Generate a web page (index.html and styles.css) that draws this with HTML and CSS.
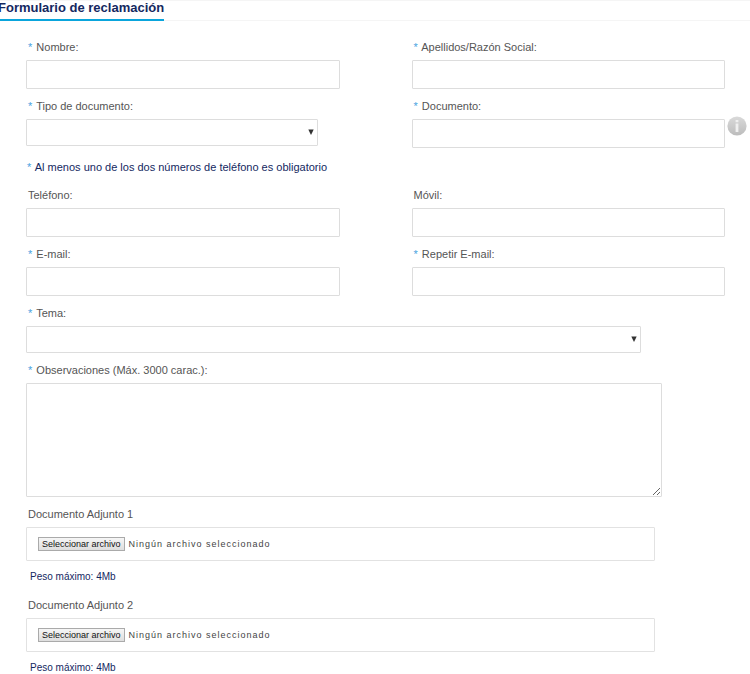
FILE: index.html
```html
<!DOCTYPE html>
<html lang="es">
<head>
<meta charset="utf-8">
<title>Formulario de reclamación</title>
<link rel="stylesheet" href="styles.css">
</head>
<body>
<header class="header">
  <h1 class="title">Formulario de reclamación</h1>
</header>
<form class="form">
  <div class="row">
    <div class="field">
      <label class="label" for="nombre"><span class="req">*</span> Nombre:</label>
      <input class="control" type="text" id="nombre">
    </div>
    <div class="field">
      <label class="label" for="apellidos"><span class="req">*</span> Apellidos/Razón Social:</label>
      <input class="control" type="text" id="apellidos">
    </div>
  </div>
  <div class="row">
    <div class="field">
      <label class="label" for="tipo"><span class="req">*</span> Tipo de documento:</label>
      <div class="select select-type">
        <select class="control" id="tipo"><option></option></select>
        <svg class="arrow" viewBox="0 0 6 6" aria-hidden="true"><path d="M0.3 0.5H5.7L3 6Z"/></svg>
      </div>
    </div>
    <div class="field">
      <label class="label" for="documento"><span class="req">*</span> Documento:</label>
      <div class="with-info">
        <input class="control" type="text" id="documento">
        <button class="info" type="button" aria-label="Información">
          <svg viewBox="0 0 20 20" width="20" height="20">
            <defs><linearGradient id="g" x1="0" y1="0" x2="0" y2="1"><stop offset="0" stop-color="#dadada"/><stop offset="1" stop-color="#bcbcbc"/></linearGradient></defs>
            <circle cx="10" cy="10" r="9.6" fill="url(#g)"/>
            <path d="M8.6 4h2.8v2.2H8.6zM8.6 7.4h2.8V16H8.6z" fill="#f0f0f0"/>
          </svg>
        </button>
      </div>
    </div>
  </div>
  <p class="note"><span class="req">*</span> Al menos uno de los dos números de teléfono es obligatorio</p>
  <div class="row">
    <div class="field">
      <label class="label" for="telefono">Teléfono:</label>
      <input class="control" type="tel" id="telefono">
    </div>
    <div class="field">
      <label class="label" for="movil">Móvil:</label>
      <input class="control" type="tel" id="movil">
    </div>
  </div>
  <div class="row">
    <div class="field">
      <label class="label" for="email"><span class="req">*</span> E-mail:</label>
      <input class="control" type="email" id="email">
    </div>
    <div class="field">
      <label class="label" for="email2"><span class="req">*</span> Repetir E-mail:</label>
      <input class="control" type="email" id="email2">
    </div>
  </div>
  <div class="field">
    <label class="label" for="tema"><span class="req">*</span> Tema:</label>
    <div class="select select-topic">
      <select class="control" id="tema"><option></option></select>
      <svg class="arrow" viewBox="0 0 6 6" aria-hidden="true"><path d="M0.3 0.5H5.7L3 6Z"/></svg>
    </div>
  </div>
  <div class="field">
    <label class="label" for="observaciones"><span class="req">*</span> Observaciones (Máx. 3000 carac.):</label>
    <textarea class="control comments" id="observaciones" maxlength="3000"></textarea>
  </div>
  <div class="field">
    <label class="label" for="adjunto1">Documento Adjunto 1</label>
    <div class="file">
      <input type="file" id="adjunto1" hidden>
      <button class="pick" type="button">Seleccionar archivo</button>
      <span class="file-name">Ningún archivo seleccionado</span>
    </div>
    <p class="hint">Peso máximo: 4Mb</p>
  </div>
  <div class="field">
    <label class="label" for="adjunto2">Documento Adjunto 2</label>
    <div class="file">
      <input type="file" id="adjunto2" hidden>
      <button class="pick" type="button">Seleccionar archivo</button>
      <span class="file-name">Ningún archivo seleccionado</span>
    </div>
    <p class="hint">Peso máximo: 4Mb</p>
  </div>
</form>
<script src="script.js"></script>
</body>
</html>
```
FILE: styles.css
```css
* { box-sizing: border-box; }

body {
  margin: 0;
  background: #fff;
  color: #555;
  font-family: "Liberation Sans", Arial, sans-serif;
  font-size: 11px;
  line-height: 16px;
}

.header {
  display: flex;
  height: 21px;
  border-top: 1px solid #f5f5f5;
  border-bottom: 1px solid #f5f5f5;
}

.title {
  height: 20px;
  margin: 0 0 0 -2px;
  border-bottom: 2px solid #0aa5dc;
  color: #14285f;
  font-size: 13px;
  line-height: 13px;
}

.form {
  display: flex;
  flex-direction: column;
  gap: 9px;
  padding: 18px 25px 0 26px;
}

.row {
  display: grid;
  grid-template-columns: 1fr 1fr;
  gap: 72px;
}

.field {
  display: flex;
  flex-direction: column;
  align-items: flex-start;
  gap: 5px;
}

.label { padding-left: 2px; }

.req { margin-right: 1px; color: #4aa3df; }

.control {
  display: block;
  width: 100%;
  height: 29px;
  margin: 0;
  padding: 0 8px;
  border: 1px solid #ddd;
  border-radius: 1px;
  background: #fff;
  color: #555;
  font: inherit;
}

.select { position: relative; }
.select .control { height: 27px; appearance: none; }
.select-type { width: 93%; }
.select-topic { width: 88%; }

.arrow {
  position: absolute;
  top: 10px;
  right: 4px;
  width: 6px;
  height: 6px;
  fill: #333;
  pointer-events: none;
}

.with-info { position: relative; width: 100%; }

.info {
  position: absolute;
  top: -3px;
  left: 100%;
  width: 20px;
  height: 20px;
  margin-left: 2px;
  padding: 0;
  border: 0;
  background: none;
}

.info svg { display: block; }

.note { margin: 2px 0 3px; padding-left: 1px; color: #14285f; }

.control.comments { width: 91%; height: 114px; padding: 8px; resize: both; }

.file {
  display: flex;
  align-items: center;
  gap: 4px;
  width: 90%;
  height: 34px;
  padding-left: 11px;
  border: 1px solid #e2e2e2;
  border-radius: 1px;
}

.pick {
  height: 14px;
  padding: 0 3px;
  border: 1px solid #aaa;
  border-radius: 0;
  background: linear-gradient(#f6f6f6, #dedede);
  color: #111;
  font: inherit;
  font-size: 9px;
  line-height: 12px;
}

.file-name { color: #444; font-size: 9px; letter-spacing: 1px; }

.hint {
  margin: 5px 0;
  padding-left: 4px;
  color: #14285f;
  font-size: 10px;
  line-height: 12px;
}
```
FILE: script.js
```js
document.querySelectorAll('.file').forEach(function (box) {
  var input = box.querySelector('input');
  box.querySelector('.pick').addEventListener('click', function () {
    input.click();
  });
  input.addEventListener('change', function () {
    box.querySelector('.file-name').textContent =
      input.files.length ? input.files[0].name : 'Ningún archivo seleccionado';
  });
});
```
